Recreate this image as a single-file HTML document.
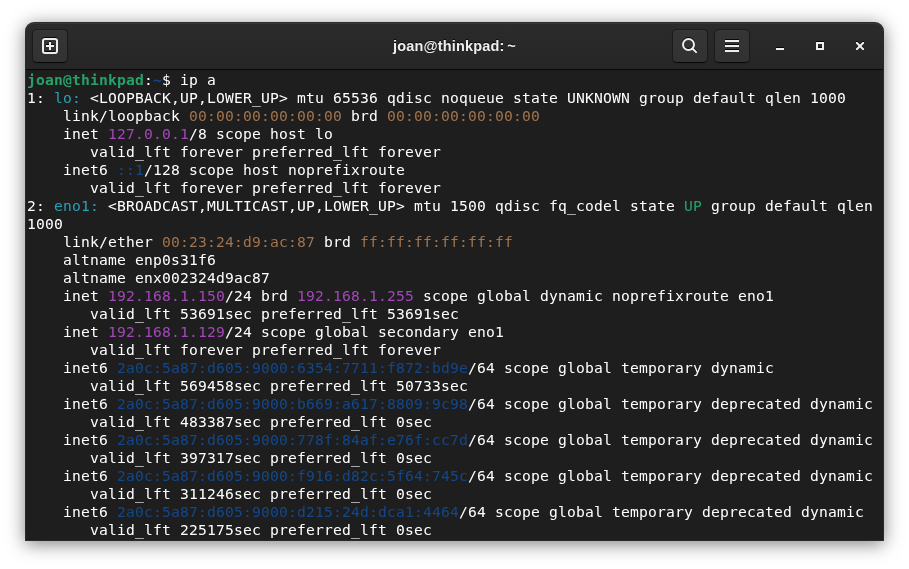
<!DOCTYPE html>
<html lang="en">
<head>
<meta charset="utf-8">
<title>joan@thinkpad: ~</title>
<style>
html,body{margin:0;padding:0;}
body{width:909px;height:569px;background:#fff;position:relative;overflow:hidden;font-family:"Liberation Sans",sans-serif;}
#win{position:absolute;left:26px;top:23px;width:857px;height:517px;border-radius:8px 8px 0 0;
 box-shadow:0 0 0 1px rgba(27,27,27,0.9),0 3px 18px 1px rgba(0,0,0,0.5);background:#1e1e1e;}
#hb{position:absolute;left:0;top:0;width:857px;height:46px;border-bottom:1px solid #070707;border-radius:8px 8px 0 0;
 background:linear-gradient(to top,#262626,#2b2b2b);box-shadow:inset 0 1px rgba(238,238,236,0.07);}
.btn{position:absolute;top:6px;width:34px;height:32px;border:1px solid #1b1b1b;border-bottom-color:#070707;border-radius:5px;
 background:linear-gradient(to top,#323232 2px,#353535);box-shadow:inset 0 1px rgba(255,255,255,0.02),0 1px 2px rgba(0,0,0,0.07);}
.btn svg,.wc svg{position:absolute;left:9px;top:8px;width:16px;height:16px;overflow:visible;filter:drop-shadow(0 -1px 0 rgba(0,0,0,0.83));}
.wc{position:absolute;top:6px;width:34px;height:34px;}
.wc svg{left:9px;top:9px;}
#title{position:absolute;left:0;width:857px;top:0;height:46px;line-height:46px;text-align:center;color:#eeeeec;font-weight:bold;font-size:14.5px;letter-spacing:0.17px;word-spacing:-1.5px;
 text-shadow:0 -1px rgba(0,0,0,0.83);white-space:pre;will-change:transform;}
#term{position:absolute;left:1px;top:48px;width:855px;height:468px;color:#fff;
 font-family:"DejaVu Sans Mono","Liberation Mono",monospace;font-size:14.667px;letter-spacing:0.1758px;line-height:18px;overflow:hidden;will-change:transform;}
.ln{height:18px;white-space:pre;}
.G{color:#26a269;font-weight:bold;}
.g{color:#26a269;}
.Bb{color:#12488b;font-weight:bold;}
.b{color:#12488b;}
.c{color:#2aa1b3;}
.y{color:#a2734c;}
.m{color:#a347ba;}
</style>
</head>
<body>
<div id="win">
 <div id="hb">
  <div id="title">joan@thinkpad: ~</div>
  <div class="btn" style="left:6px">
   <svg viewBox="0 0 16 16"><rect x="1" y="1" width="14" height="14" rx="2" fill="none" stroke="#eeeeec" stroke-width="2"/><path d="M7 4h2v3h3v2H9v3H7V9H4V7h3z" fill="#eeeeec"/></svg>
  </div>
  <div class="btn" style="left:646px">
   <svg viewBox="0 0 16 16"><g stroke="#eeeeec" fill="none" stroke-width="2"><circle cx="6.5" cy="6.5" r="5.5"/><path d="M10.5 10.5L14.1 14.1" stroke-linecap="round"/></g></svg>
  </div>
  <div class="btn" style="left:688px">
   <svg viewBox="0 0 16 16"><path d="M1 2h14v2H1zM1 7h14v2H1zM1 12h14v2H1z" fill="#eeeeec"/></svg>
  </div>
  <div class="wc" style="left:737px"><svg viewBox="0 0 16 16"><path d="M4 10h8v2H4z" fill="#eeeeec"/></svg></div>
  <div class="wc" style="left:777px"><svg viewBox="0 0 16 16"><path d="M4 4h8v8H4zM6 6v4h4V6z" fill="#eeeeec" fill-rule="evenodd"/></svg></div>
  <div class="wc" style="left:817px"><svg viewBox="0 0 16 16"><path d="M4 4h1.03c.25.01.5.11.69.29L8 6.59l2.28-2.3c.27-.2.5-.28.72-.29h1v1c0 .29-.03.55-.25.75L9.47 8.03l2.25 2.25c.19.19.28.44.28.72v1h-1c-.27 0-.53-.09-.72-.28L8 9.44l-2.28 2.28c-.19.19-.45.28-.72.28H4v-1c0-.28.09-.53.28-.72l2.28-2.25-2.28-2.28C4.070 5.550 4 5.290 4 5z" fill="#eeeeec"/></svg></div>
 </div>
 <div id="term">
<div class="ln"><span class="G">joan@thinkpad</span>:<span class="Bb">~</span>$ ip a</div>
<div class="ln">1: <span class="c">lo: </span>&lt;LOOPBACK,UP,LOWER_UP&gt; mtu 65536 qdisc noqueue state UNKNOWN group default qlen 1000</div>
<div class="ln">    link/loopback <span class="y">00:00:00:00:00:00</span> brd <span class="y">00:00:00:00:00:00</span></div>
<div class="ln">    inet <span class="m">127.0.0.1</span>/8 scope host lo</div>
<div class="ln">       valid_lft forever preferred_lft forever</div>
<div class="ln">    inet6 <span class="b">::1</span>/128 scope host noprefixroute</div>
<div class="ln">       valid_lft forever preferred_lft forever</div>
<div class="ln">2: <span class="c">eno1: </span>&lt;BROADCAST,MULTICAST,UP,LOWER_UP&gt; mtu 1500 qdisc fq_codel state <span class="g">UP</span> group default qlen</div>
<div class="ln">1000</div>
<div class="ln">    link/ether <span class="y">00:23:24:d9:ac:87</span> brd <span class="y">ff:ff:ff:ff:ff:ff</span></div>
<div class="ln">    altname enp0s31f6</div>
<div class="ln">    altname enx002324d9ac87</div>
<div class="ln">    inet <span class="m">192.168.1.150</span>/24 brd <span class="m">192.168.1.255</span> scope global dynamic noprefixroute eno1</div>
<div class="ln">       valid_lft 53691sec preferred_lft 53691sec</div>
<div class="ln">    inet <span class="m">192.168.1.129</span>/24 scope global secondary eno1</div>
<div class="ln">       valid_lft forever preferred_lft forever</div>
<div class="ln">    inet6 <span class="b">2a0c:5a87:d605:9000:6354:7711:f872:bd9e</span>/64 scope global temporary dynamic</div>
<div class="ln">       valid_lft 569458sec preferred_lft 50733sec</div>
<div class="ln">    inet6 <span class="b">2a0c:5a87:d605:9000:b669:a617:8809:9c98</span>/64 scope global temporary deprecated dynamic</div>
<div class="ln">       valid_lft 483387sec preferred_lft 0sec</div>
<div class="ln">    inet6 <span class="b">2a0c:5a87:d605:9000:778f:84af:e76f:cc7d</span>/64 scope global temporary deprecated dynamic</div>
<div class="ln">       valid_lft 397317sec preferred_lft 0sec</div>
<div class="ln">    inet6 <span class="b">2a0c:5a87:d605:9000:f916:d82c:5f64:745c</span>/64 scope global temporary deprecated dynamic</div>
<div class="ln">       valid_lft 311246sec preferred_lft 0sec</div>
<div class="ln">    inet6 <span class="b">2a0c:5a87:d605:9000:d215:24d:dca1:4464</span>/64 scope global temporary deprecated dynamic</div>
<div class="ln">       valid_lft 225175sec preferred_lft 0sec</div>
 </div>
</div>
</body>
</html>
